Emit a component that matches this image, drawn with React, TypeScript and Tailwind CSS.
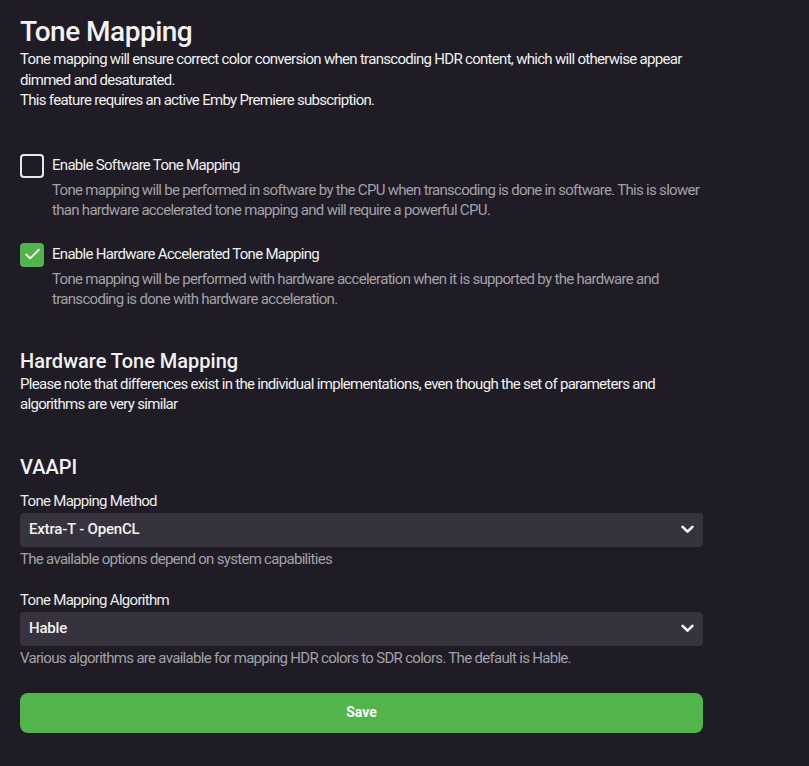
import React from "react";
import { Check } from "lucide-react";

function CheckRow({ checked, label, desc }: { checked: boolean; label: string; desc: string }) {
  return (
    <div>
      <div className="flex items-center h-6 gap-2">
        {checked ? (
          <div className="w-6 h-6 rounded-[4px] bg-[#52b54b] flex items-center justify-center">
            <Check size={19} strokeWidth={2.25} className="text-white" />
          </div>
        ) : (
          <div className="w-6 h-6 rounded-[4px] border-2 border-[#e8e8e8]" />
        )}
        <span className="text-[15px] tracking-[-0.7px] text-[#f0f0f0]">{label}</span>
      </div>
      <p className="pl-8 mt-[2px] text-[15px] leading-[20px] tracking-[-0.7px] text-[#a2a1a6]">{desc}</p>
    </div>
  );
}

function Chevron() {
  return (
    <svg width="13" height="9" viewBox="0 0 13 9" fill="none">
      <path d="M1.6 1.8 L6.5 6.7 L11.4 1.8" stroke="#ffffff" strokeWidth="2.6" strokeLinecap="round" strokeLinejoin="round" />
    </svg>
  );
}

function Select({ label, value, help }: { label: string; value: string; help: string }) {
  return (
    <div>
      <div className="text-[15px] leading-[20px] tracking-[-0.7px] text-[#ececec]">{label}</div>
      <div className="mt-[2px] h-[34px] rounded-[4px] bg-[#36323e] flex items-center justify-between pl-[9px] pr-[9px]">
        <span className="text-[15px] font-medium tracking-[-0.2px] text-[#f2f2f2]">{value}</span>
        <Chevron />
      </div>
      <div className="mt-[2px] text-[15px] leading-[20px] tracking-[-0.7px] text-[#a2a1a6]">{help}</div>
    </div>
  );
}

export default function App() {
  return (
    <div
      className="min-h-screen bg-[#1f1c26] px-5 pt-[15px] pb-8"
      style={{ fontFamily: "Roboto, 'Liberation Sans', sans-serif" }}
    >
      <div className="max-w-[683px]">
        <h1 className="text-[28px] leading-[34px] font-medium tracking-[-0.5px] text-[#f2f2f2]">Tone Mapping</h1>
        <p className="text-[15px] leading-[20.5px] tracking-[-0.7px] text-[#f0f0f0]">
          Tone mapping will ensure correct color conversion when transcoding HDR content, which will otherwise appear dimmed and desaturated.
          <br />
          This feature requires an active Emby Premiere subscription.
        </p>

        <div className="mt-[43px]">
          <CheckRow
            checked={false}
            label="Enable Software Tone Mapping"
            desc="Tone mapping will be performed in software by the CPU when transcoding is done in software. This is slower than hardware accelerated tone mapping and will require a powerful CPU."
          />
        </div>
        <div className="mt-[23px]">
          <CheckRow
            checked={true}
            label="Enable Hardware Accelerated Tone Mapping"
            desc="Tone mapping will be performed with hardware acceleration when it is supported by the hardware and transcoding is done with hardware acceleration."
          />
        </div>

        <h2 className="mt-[40px] text-[20px] leading-[24px] font-medium text-[#f2f2f2]">Hardware Tone Mapping</h2>
        <p className="mt-[1px] text-[15px] leading-[20.5px] tracking-[-0.7px] text-[#f0f0f0]">
          Please note that differences exist in the individual implementations, even though the set of parameters and algorithms are very similar
        </p>

        <h2 className="mt-[40px] text-[20px] leading-[24px] font-medium text-[#f2f2f2]">VAAPI</h2>

        <div className="mt-[12px]">
          <Select label="Tone Mapping Method" value="Extra-T - OpenCL" help="The available options depend on system capabilities" />
        </div>
        <div className="mt-[21px]">
          <Select
            label="Tone Mapping Algorithm"
            value="Hable"
            help="Various algorithms are available for mapping HDR colors to SDR colors. The default is Hable."
          />
        </div>

        <button className="mt-[25px] w-full h-10 rounded-[8px] bg-[#52b54b] text-white text-[14px] font-bold">
          Save
        </button>
      </div>
    </div>
  );
}
